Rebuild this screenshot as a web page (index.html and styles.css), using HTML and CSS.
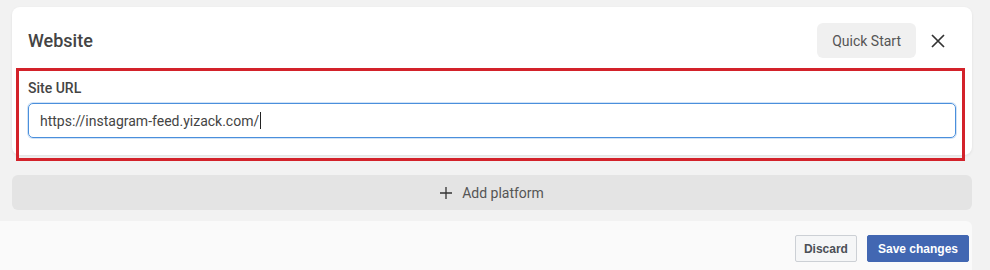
FILE: index.html
```html
<!DOCTYPE html>
<html lang="en">
<head>
    <meta charset="UTF-8">
    <meta name="viewport" content="width=device-width, initial-scale=1.0">
    <title>Website</title>
    <link rel="stylesheet" href="styles.css">
</head>
<body>

    <div class="editor">
        <!-- platform card -->
        <div class="card">
            <div class="card-head">
                <h2 class="card-title">Website</h2>
                <div class="head-actions">
                    <button class="quick-btn">Quick Start</button>
                    <button class="close-btn" aria-label="Close">
                        <svg width="14" height="14" viewBox="0 0 14 14">
                            <path d="M1 1L13 13M13 1L1 13" stroke="#333" stroke-width="1.7" fill="none"/>
                        </svg>
                    </button>
                </div>
            </div>
            <label class="field-label" for="siteUrl">Site URL</label>
            <div class="field-input">
                <span>https://instagram-feed.yizack.com/</span><span class="caret"></span>
            </div>
        </div>

        <button class="add-platform">
            <svg width="12" height="12" viewBox="0 0 12 12">
                <path d="M6 0V12M0 6H12" stroke="#333" stroke-width="1.3" fill="none"/>
            </svg>
            <span>Add platform</span>
        </button>

        <!-- highlight frame -->
        <div class="highlight"></div>
    </div>

    <div class="footer">
        <button class="btn-discard">Discard</button>
        <button class="btn-save">Save changes</button>
    </div>

</body>
</html>
```

FILE: styles.css
```css
body {
    margin: 0;
    background: #f2f2f2;
    font-family: Roboto, 'Liberation Sans', sans-serif;
    color: #444;
    height: 270px;
    overflow: hidden;
}

button {
    font-family: inherit;
    cursor: pointer;
}

.editor {
    position: relative;
    width: 960px;
    padding: 7px 0 11px 12px;
}

.card {
    background: #fff;
    border-radius: 8px;
    box-shadow: 0 1px 3px rgba(0, 0, 0, 0.08);
    padding: 16px 16px 17px 16px;
    display: flex;
    flex-direction: column;
}

.card-head {
    display: flex;
    align-items: center;
    justify-content: space-between;
    height: 35px;
}

.card-title {
    margin: 0;
    font-size: 18px;
    font-weight: 500;
    color: #444;
}

.head-actions {
    display: flex;
    align-items: center;
    gap: 4px;
}

.quick-btn {
    height: 35px;
    padding: 0 15px;
    border: none;
    border-radius: 6px;
    background: #f0f0f0;
    color: #555;
    font-size: 14px;
}

.close-btn {
    width: 36px;
    height: 35px;
    border: none;
    background: none;
    display: flex;
    align-items: center;
    justify-content: center;
    padding: 0;
}

.field-label {
    margin-top: 22px;
    font-size: 14px;
    font-weight: 500;
    line-height: 16px;
    color: #444;
}

.field-input {
    margin-top: 7px;
    height: 35px;
    box-sizing: border-box;
    padding: 0 11px;
    border: 1px solid #4a8fdc;
    border-radius: 5px;
    box-shadow: 0 0 0 1px rgba(74, 143, 220, 0.25);
    font-size: 14px;
    color: #444;
    display: flex;
    align-items: center;
}

.caret {
    width: 1px;
    height: 17px;
    margin-left: 1px;
    background: #222;
}

.add-platform {
    margin-top: 20px;
    width: 100%;
    height: 35px;
    border: none;
    border-radius: 6px;
    background: #e4e4e4;
    color: #555;
    font-size: 14px;
    display: flex;
    align-items: center;
    justify-content: center;
    gap: 10px;
}

.highlight {
    position: absolute;
    left: 16px;
    top: 68px;
    width: 943px;
    height: 87px;
    border: 3px solid #d3222a;
    pointer-events: none;
}

.footer {
    width: 972px;
    height: 49px;
    background: #fafafa;
    border-top-right-radius: 6px;
    display: flex;
    justify-content: flex-end;
    align-items: flex-start;
    gap: 10px;
    padding-top: 14px;
    box-sizing: border-box;
    padding-right: 3px;
}

.btn-discard,
.btn-save {
    height: 27px;
    border-radius: 2px;
    font-family: 'Liberation Sans', Arial, sans-serif;
    font-size: 12px;
    font-weight: 700;
}

.btn-discard {
    border: 1px solid #ccd0d5;
    background: #f5f6f7;
    color: #4b4f56;
    padding: 0 8px;
}

.btn-save {
    border: 1px solid #4267b2;
    background: #4267b2;
    color: #fff;
    padding: 0 10px;
}
```
